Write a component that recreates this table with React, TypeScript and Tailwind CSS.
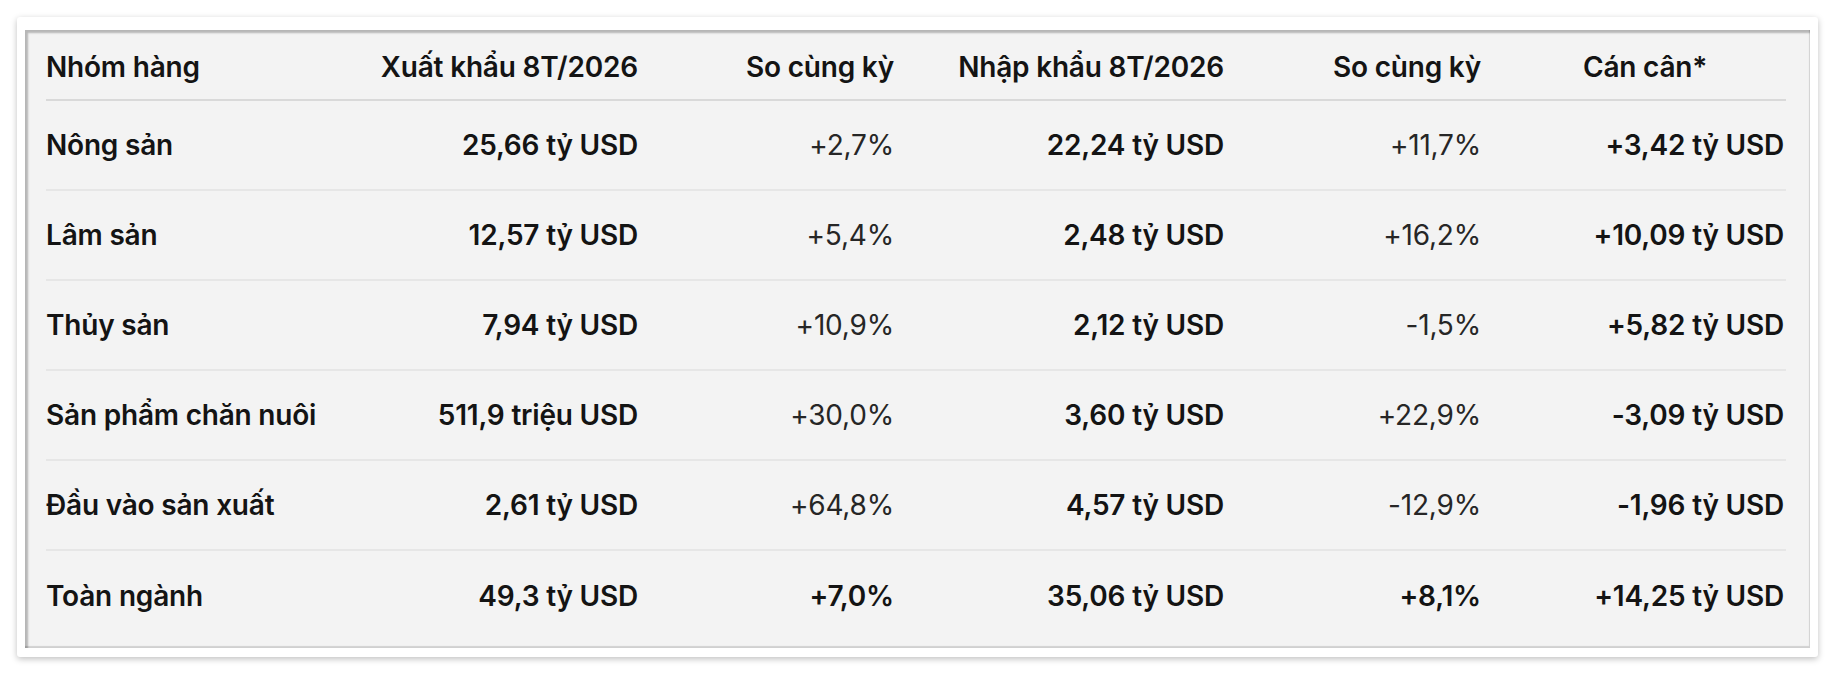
import React from 'react';

interface Row {
  group: string;
  exportValue: string;
  exportChange: string;
  importValue: string;
  importChange: string;
  balance: string;
  total?: boolean;
}

const rows: Row[] = [
  { group: 'Nông sản', exportValue: '25,66 tỷ USD', exportChange: '+2,7%', importValue: '22,24 tỷ USD', importChange: '+11,7%', balance: '+3,42 tỷ USD' },
  { group: 'Lâm sản', exportValue: '12,57 tỷ USD', exportChange: '+5,4%', importValue: '2,48 tỷ USD', importChange: '+16,2%', balance: '+10,09 tỷ USD' },
  { group: 'Thủy sản', exportValue: '7,94 tỷ USD', exportChange: '+10,9%', importValue: '2,12 tỷ USD', importChange: '-1,5%', balance: '+5,82 tỷ USD' },
  { group: 'Sản phẩm chăn nuôi', exportValue: '511,9 triệu USD', exportChange: '+30,0%', importValue: '3,60 tỷ USD', importChange: '+22,9%', balance: '-3,09 tỷ USD' },
  { group: 'Đầu vào sản xuất', exportValue: '2,61 tỷ USD', exportChange: '+64,8%', importValue: '4,57 tỷ USD', importChange: '-12,9%', balance: '-1,96 tỷ USD' },
  { group: 'Toàn ngành', exportValue: '49,3 tỷ USD', exportChange: '+7,0%', importValue: '35,06 tỷ USD', importChange: '+8,1%', balance: '+14,25 tỷ USD', total: true },
];

const cols = 'grid grid-cols-[324px_268px_256px_330px_257px_303px]';

export default function App() {
  return (
    <div className="w-[1838px] h-[676px] bg-white pt-[17px] pl-[17px] font-['Inter','Noto_Sans',sans-serif] text-[#141414]">
      {/* screenshot frame */}
      <div className="w-[1801px] h-[640px] bg-white rounded-[3px] shadow-[0_2px_6px_rgba(0,0,0,0.25)] pt-[13px] pl-[8px] pr-[8px] pb-[9px]">
        <div className="h-full bg-[#f3f3f3] shadow-[inset_3px_3px_2px_rgba(0,0,0,0.25),inset_-1px_-2px_1px_rgba(0,0,0,0.14)] pl-[21px] pr-[24px]">
          {/* header */}
          <div className={`${cols} h-[71px] items-center pt-[4px] border-b-2 border-[#d9d9d9] text-[28px] font-[560] tracking-[-0.2px] whitespace-nowrap`}>
            <div>Nhóm hàng</div>
            <div className="text-right">Xuất khẩu 8T/2026</div>
            <div className="text-right">So cùng kỳ</div>
            <div className="text-right">Nhập khẩu 8T/2026</div>
            <div className="text-right">So cùng kỳ</div>
            <div className="pl-[102px]">Cán cân*</div>
          </div>

          {rows.map((r, i) => (
            <div
              key={r.group}
              className={`${cols} h-[90px] items-center text-[28px] tracking-[-0.2px] whitespace-nowrap ${
                i < rows.length - 1 ? 'border-b-2 border-[#e6e6e6]' : ''
              }`}
            >
              <div className="font-[560]">{r.group}</div>
              <div className="text-right font-[560]">{r.exportValue}</div>
              <div className={`text-right ${r.total ? 'font-[560]' : 'font-normal text-[#262626]'}`}>{r.exportChange}</div>
              <div className="text-right font-[560]">{r.importValue}</div>
              <div className={`text-right ${r.total ? 'font-[560]' : 'font-normal text-[#262626]'}`}>{r.importChange}</div>
              <div className="text-right font-[560]">{r.balance}</div>
            </div>
          ))}
        </div>
      </div>
    </div>
  );
}
